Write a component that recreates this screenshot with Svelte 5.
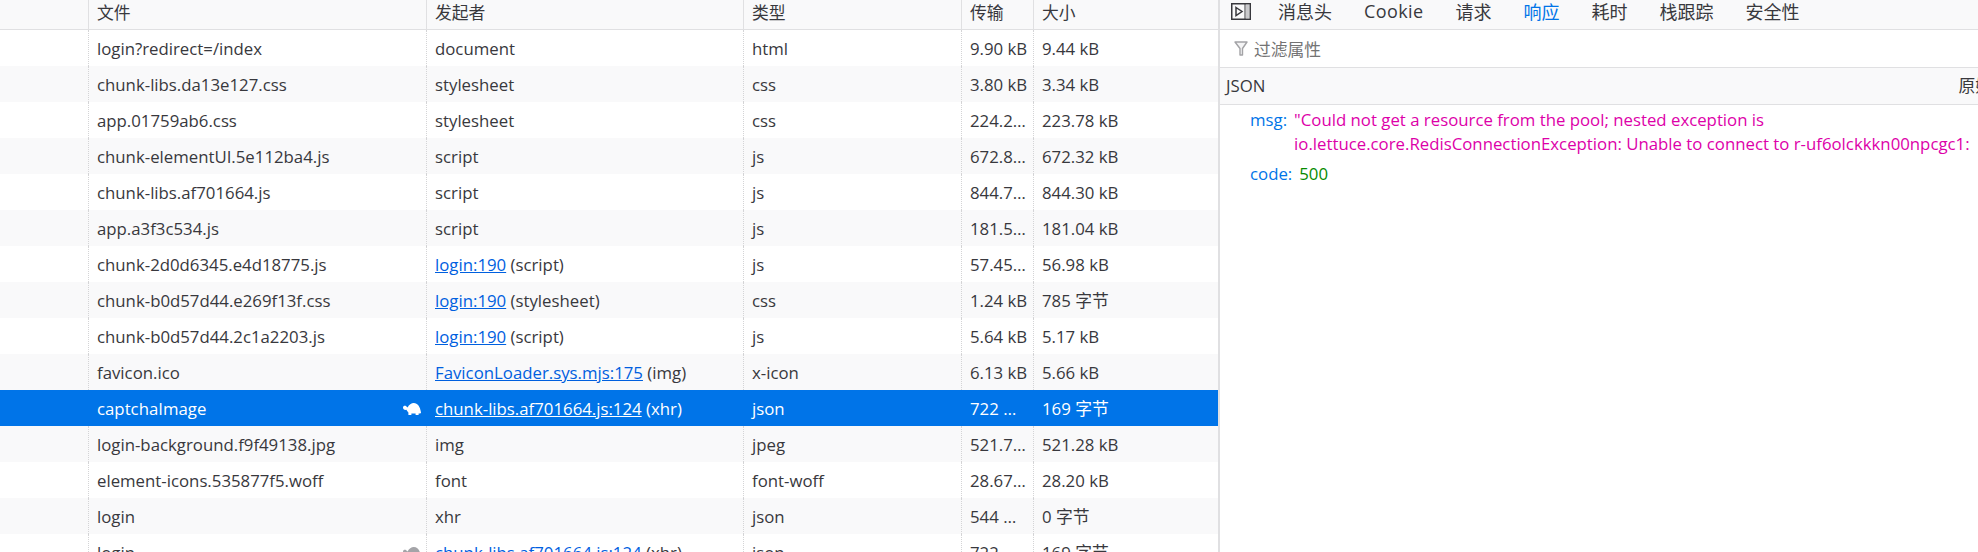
<script lang="ts">
	interface Row {
		file: string;
		cause: string;
		link?: string;
		type: string;
		sent: string;
		size: string;
		slow?: boolean;
		selected?: boolean;
	}

	const columns = ['', '文件', '发起者', '类型', '传输', '大小'];
	const tabs = ['消息头', 'Cookie', '请求', '响应', '耗时', '栈跟踪', '安全性'];
	const activeTab = '响应';

	const rows: Row[] = [
		{ file: 'login?redirect=/index', cause: 'document', type: 'html', sent: '9.90 kB', size: '9.44 kB' },
		{ file: 'chunk-libs.da13e127.css', cause: 'stylesheet', type: 'css', sent: '3.80 kB', size: '3.34 kB' },
		{ file: 'app.01759ab6.css', cause: 'stylesheet', type: 'css', sent: '224.2…', size: '223.78 kB' },
		{ file: 'chunk-elementUI.5e112ba4.js', cause: 'script', type: 'js', sent: '672.8…', size: '672.32 kB' },
		{ file: 'chunk-libs.af701664.js', cause: 'script', type: 'js', sent: '844.7…', size: '844.30 kB' },
		{ file: 'app.a3f3c534.js', cause: 'script', type: 'js', sent: '181.5…', size: '181.04 kB' },
		{ file: 'chunk-2d0d6345.e4d18775.js', link: 'login:190', cause: '(script)', type: 'js', sent: '57.45…', size: '56.98 kB' },
		{ file: 'chunk-b0d57d44.e269f13f.css', link: 'login:190', cause: '(stylesheet)', type: 'css', sent: '1.24 kB', size: '785 字节' },
		{ file: 'chunk-b0d57d44.2c1a2203.js', link: 'login:190', cause: '(script)', type: 'js', sent: '5.64 kB', size: '5.17 kB' },
		{ file: 'favicon.ico', link: 'FaviconLoader.sys.mjs:175', cause: '(img)', type: 'x-icon', sent: '6.13 kB', size: '5.66 kB' },
		{ file: 'captchaImage', link: 'chunk-libs.af701664.js:124', cause: '(xhr)', type: 'json', sent: '722 …', size: '169 字节', slow: true, selected: true },
		{ file: 'login-background.f9f49138.jpg', cause: 'img', type: 'jpeg', sent: '521.7…', size: '521.28 kB' },
		{ file: 'element-icons.535877f5.woff', cause: 'font', type: 'font-woff', sent: '28.67…', size: '28.20 kB' },
		{ file: 'login', cause: 'xhr', type: 'json', sent: '544 …', size: '0 字节' },
		{ file: 'login', link: 'chunk-libs.af701664.js:124', cause: '(xhr)', type: 'json', sent: '722 …', size: '169 字节', slow: true }
	];
</script>

<div class="devtools">
	<div class="requests">
		<div class="grid head">
			{#each columns as col}
				<div class="cell">{col}</div>
			{/each}
		</div>
		{#each rows as row, i}
			<div class="grid row" class:alt={i % 2 === 1} class:selected={row.selected}>
				<div class="cell"></div>
				<div class="cell file">
					<span>{row.file}</span>
					{#if row.slow}
						<svg class="turtle" width="18" height="12" viewBox="0 0 18 12">
							<path d="M0 4.5C0 3 1.4 2.4 2.6 2.8L4.6 4.4C6 1.6 8.4 0 10.8 0C14.6 0 17.2 3.6 18 9.6C18 10.2 17.6 10.4 17 10.4H15.6V12H12.6V10.4H8.4V12H5.4V9.4C4.4 8.4 3.8 7.6 3.4 6.8C1.4 7.2 0 6.2 0 4.5Z" fill="currentColor" />
						</svg>
					{/if}
				</div>
				<div class="cell">
					{#if row.link}<span class="link">{row.link}</span>{' '}{/if}{row.cause}
				</div>
				<div class="cell">{row.type}</div>
				<div class="cell">{row.sent}</div>
				<div class="cell">{row.size}</div>
			</div>
		{/each}
	</div>

	<div class="sidebar">
		<div class="tabs">
			<svg class="panel-icon" width="20" height="17" viewBox="0 0 20 17">
				<rect x="0.75" y="0.75" width="18.5" height="15.5" fill="none" stroke="#38383d" stroke-width="1.5" />
				<path d="M14 1v15" stroke="#38383d" stroke-width="1" />
				<path d="M16 1.5v14M18 1.5v14" stroke="#9a9a9e" stroke-width="1" />
				<path d="M5 4.5l6 4-6 4z" fill="none" stroke="#38383d" stroke-width="1.5" />
			</svg>
			{#each tabs as tab}
				<div class="tab" class:active={tab === activeTab} class:latin={tab === 'Cookie'}>{tab}</div>
			{/each}
		</div>
		<div class="filter">
			<svg width="14" height="15" viewBox="0 0 14 15">
				<path d="M1 1h12L8.5 7.5V14h-2.5V7.5z" fill="#f4f4f5" stroke="#a3a3a6" stroke-width="1.4" stroke-linejoin="round" />
			</svg>
			<span>过滤属性</span>
		</div>
		<div class="section">
			<span>JSON</span>
			<span class="raw">原始</span>
		</div>
		<div class="tree">
			<div class="entry">
				<span class="key">msg:</span>
				<span class="str">"Could not get a resource from the pool; nested exception is<br />io.lettuce.core.RedisConnectionException: Unable to connect to r-uf6olckkkn00npcgc1:</span>
			</div>
			<div class="entry">
				<span class="key">code:</span>
				<span class="num">500</span>
			</div>
		</div>
	</div>
</div>

<style>
	:global(body) {
		margin: 0;
		background: #fff;
		overflow: hidden;
	}

	.devtools {
		display: flex;
		width: 1978px;
		height: 552px;
		overflow: hidden;
		font-family: 'Open Sans', 'Noto Sans CJK SC', sans-serif;
		font-size: 16.8px;
		color: #38383d;
	}

	.requests {
		width: 1218px;
		flex: none;
	}

	.grid {
		display: grid;
		grid-template-columns: 88px 338px 317px 218px 72px 185px;
	}

	.head {
		height: 29px;
		background: #f9f9fa;
		border-bottom: 1px solid #e0e0e2;
		line-height: 26px;
	}

	.head .cell + .cell {
		border-left: 1px solid #e0e0e2;
	}

	.row {
		height: 36px;
		line-height: 34px;
	}

	.row .cell {
		padding-top: 2px;
	}

	.row.alt {
		background: #f9f9fa;
	}

	.row.selected {
		background: #0074e8;
		color: #fff;
	}

	.cell {
		padding-left: 8px;
		white-space: nowrap;
		overflow: hidden;
		min-width: 0;
	}

	.row .cell + .cell {
		border-left: 1px dotted #d4d4d6;
	}

	.row.selected .cell + .cell {
		border-left-color: #0074e8;
	}

	.file {
		display: flex;
		align-items: center;
		justify-content: space-between;
		padding-right: 5px;
	}

	.turtle {
		color: #a4a4a8;
		flex: none;
	}

	.selected .turtle {
		color: #fff;
	}

	.link {
		color: #0060df;
		text-decoration: underline;
	}

	.selected .link {
		color: #fff;
	}

	.sidebar {
		flex: 1;
		min-width: 0;
		border-left: 2px solid #e0e0e2;
		overflow: hidden;
	}

	.tabs {
		display: flex;
		align-items: center;
		height: 30px;
		padding-left: 11px;
		padding-bottom: 7px;
		box-sizing: border-box;
		background: #f9f9fa;
		border-bottom: 1px solid #e0e0e2;
		font-size: 18px;
		overflow: hidden;
	}

	.panel-icon {
		flex: none;
		margin-right: 11px;
	}

	.tab {
		padding: 0 16px;
	}

	.tab.latin {
		letter-spacing: 0.4px;
	}

	.tab.active {
		color: #0074e8;
	}

	.filter {
		display: flex;
		align-items: center;
		gap: 6px;
		height: 37px;
		padding-left: 14px;
		border-bottom: 1px solid #e0e0e2;
		color: #737373;
	}

	.section {
		display: flex;
		justify-content: space-between;
		height: 36px;
		line-height: 36px;
		padding-left: 6px;
		background: #f9f9fa;
		border-bottom: 1px solid #e0e0e2;
		white-space: nowrap;
	}

	.raw {
		margin-right: -14px;
	}

	.tree {
		padding-top: 3px;
		white-space: nowrap;
	}

	.entry {
		display: flex;
		gap: 7px;
		padding-left: 30px;
		line-height: 24px;
		margin-bottom: 6px;
	}

	.key {
		color: #0074e8;
	}

	.str {
		color: #dd00a9;
	}

	.num {
		color: #058b00;
	}
</style>
